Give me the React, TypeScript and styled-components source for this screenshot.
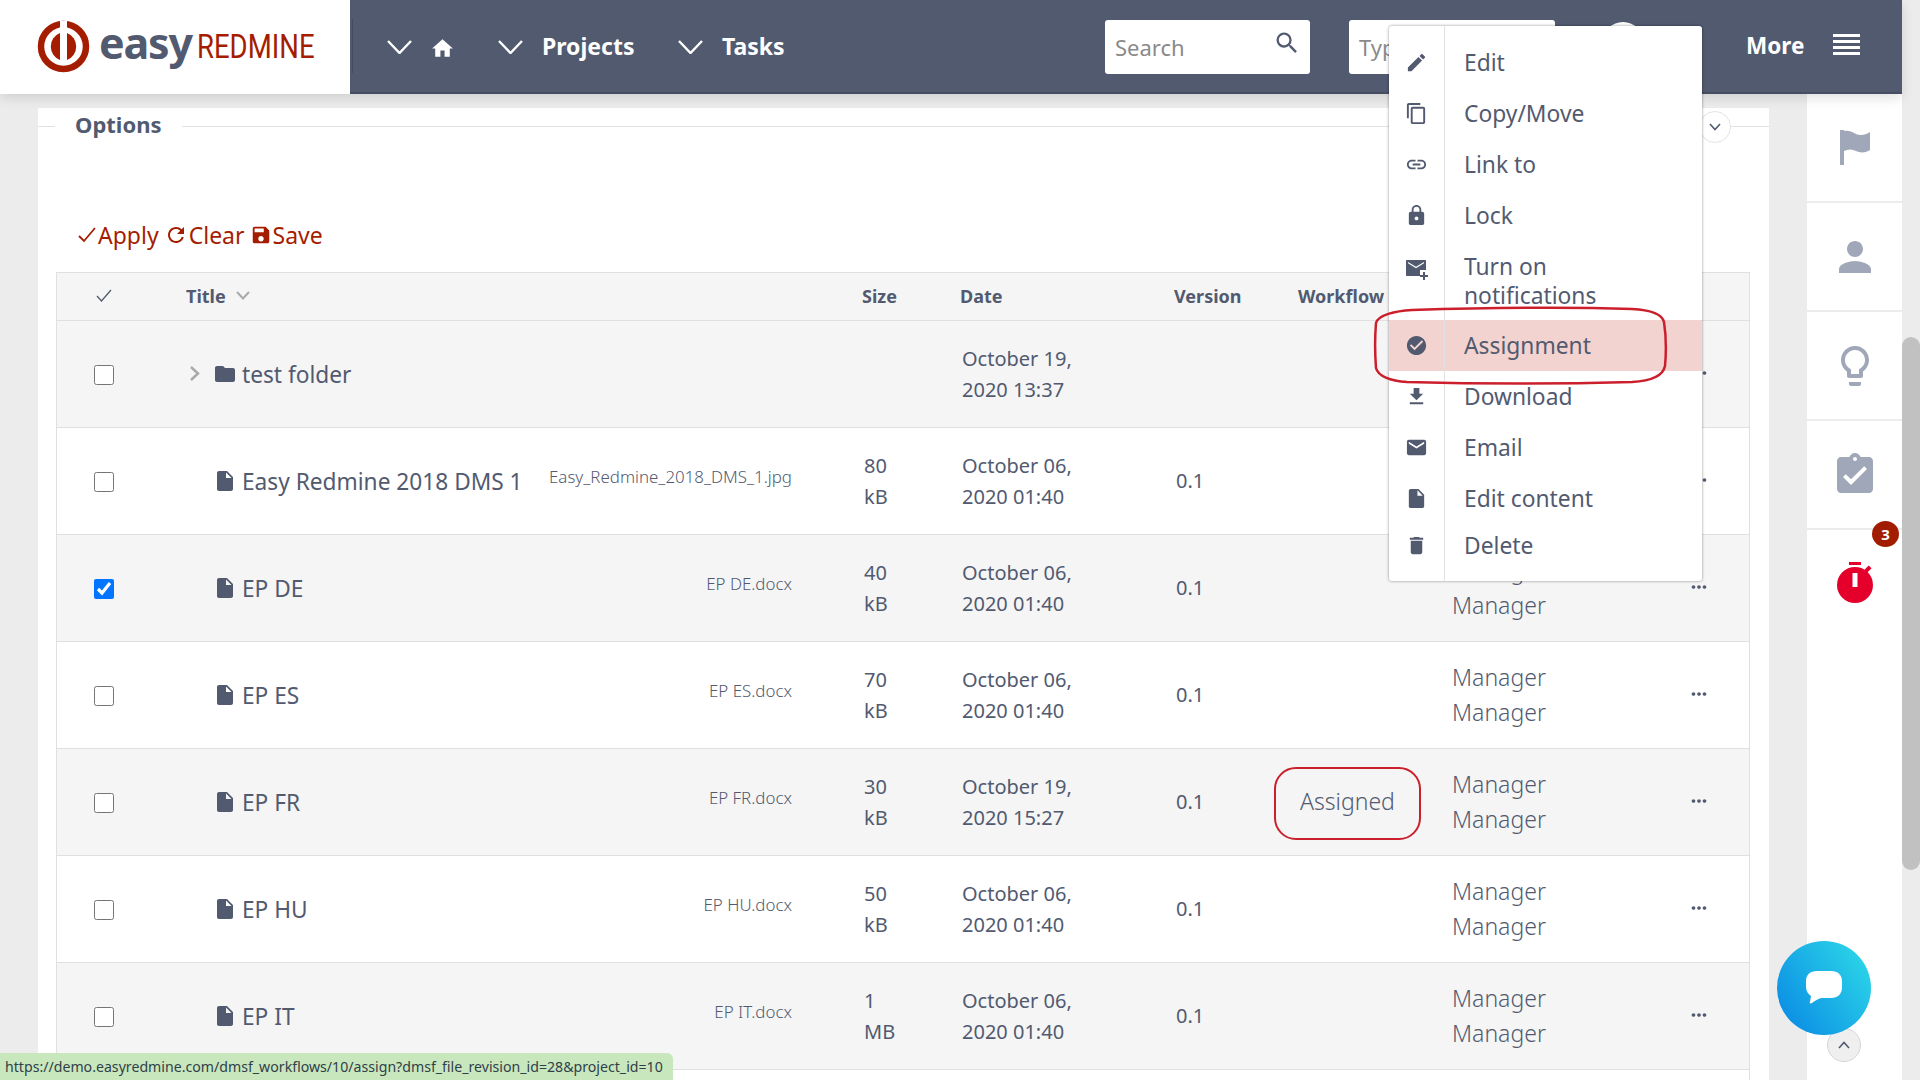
import * as React from 'react';
import styled, { createGlobalStyle } from 'styled-components';
import {
    MdEdit, MdContentCopy, MdLink, MdLock, MdCheckCircle, MdFileDownload, MdEmail,
    MdInsertDriveFile, MdDelete, MdFolder, MdHome, MdSearch, MdPerson, MdLightbulbOutline,
    MdAssignmentTurnedIn, MdSave, MdRefresh, MdMoreHoriz,
} from 'react-icons/md';

const slate = '#525a70';
const rust = '#a51d00';

const GlobalStyle = createGlobalStyle`
    html, body { margin: 0; padding: 0; height: 100%; overflow: hidden; background: #ececec; }
    body { font-family: "Noto Sans", "Open Sans", sans-serif; color: ${slate}; }
    * { box-sizing: border-box; }
`;

const Page = styled.div`
    position: relative;
    width: 1920px;
    height: 1080px;
    overflow: hidden;
    background: #ececec;
`;

/* header */
const Header = styled.header`
    position: absolute;
    left: 0;
    top: 0;
    width: 1902px;
    height: 94px;
    background: ${slate};
    border-bottom: 2px solid #474e63;
    box-shadow: 0 4px 12px rgba(0, 0, 0, .12);
    z-index: 5;
`;
const LogoBox = styled.div`
    position: absolute;
    left: 0;
    top: 0;
    width: 350px;
    height: 94px;
    background: #fff;
`;
const LogoEasy = styled.span`
    position: absolute;
    left: 99px;
    top: 15px;
    font: 700 43px/56px "Noto Sans", sans-serif;
    letter-spacing: -1.200px;
    color: ${slate};
`;
const LogoRedmine = styled.span`
    position: absolute;
    left: 197px;
    top: 25px;
    font: 400 34px/42px "Roboto", sans-serif;
    color: ${rust};
    transform: scaleX(.81);
    transform-origin: left center;
`;
const Separator = styled.div`
    position: absolute;
    left: 352px;
    top: 19px;
    width: 1px;
    height: 54px;
    background: #454c60;
`;
const NavChevron = styled.svg<{ $x: number }>`
    position: absolute;
    left: ${p => p.$x}px;
    top: 40px;
    width: 25px;
    height: 14px;
`;
const NavLabel = styled.span<{ $x: number; $size?: number }>`
    position: absolute;
    left: ${p => p.$x}px;
    top: 30px;
    font-size: ${p => p.$size ?? 23}px;
    line-height: 32px;
    font-weight: 700;
    color: #fff;
`;
const HomeIcon = styled(MdHome)`
    position: absolute;
    left: 430px;
    top: 36px;
    color: #fff;
    font-size: 25px;
`;
const SearchBox = styled.div<{ $x: number; $w: number }>`
    position: absolute;
    left: ${p => p.$x}px;
    top: 20px;
    width: ${p => p.$w}px;
    height: 54px;
    background: #fff;
    border-radius: 3px;
    padding-left: 10px;
    font-size: 22px;
    line-height: 54px;
    color: #8a8a8a;
`;
const SearchGlyph = styled(MdSearch)`
    position: absolute;
    right: 9px;
    top: 9px;
    font-size: 28px;
    color: ${slate};
`;
const Avatar = styled.div`
    position: absolute;
    left: 1603px;
    top: 22px;
    width: 40px;
    height: 40px;
    border-radius: 50%;
    background: #fff;
`;
const MenuBars = styled.div`
    position: absolute;
    left: 1833px;
    top: 34px;
    width: 27px;
    height: 21px;
    background: repeating-linear-gradient(#fff 0 3px, transparent 3px 6px);
`;

/* options panel */
const Panel = styled.main`
    position: absolute;
    left: 38px;
    top: 108px;
    width: 1731px;
    height: 972px;
    background: #fff;
`;
const LegendLine = styled.div`
    position: absolute;
    left: 0;
    right: 0;
    top: 18px;
    height: 1px;
    background: #e2e2e2;
`;
const Legend = styled.div`
    position: absolute;
    left: 17px;
    top: 0;
    padding: 0 20px;
    font-size: 22px;
    line-height: 32px;
    font-weight: 700;
    background: #fff;
`;
const RoundButton = styled.div`
    position: absolute;
    display: flex;
    align-items: center;
    justify-content: center;
    border: 1px solid #e4e4e4;
    border-radius: 50%;
    background: #fff;
    color: ${slate};
`;
const CollapseButton = styled(RoundButton)`
    left: 1661px;
    top: 3px;
    width: 32px;
    height: 32px;
`;
const Actions = styled.div`
    position: absolute;
    left: 39px;
    top: 111px;
    display: flex;
    align-items: center;
    color: ${rust};
    font-size: 23px;
    line-height: 32px;
    gap: 5px;
`;
const ActionLink = styled.span`
    display: inline-flex;
    align-items: center;
    gap: 1px;
    svg { flex: none; }
`;

/* table */
const Table = styled.div`
    position: absolute;
    left: 18px;
    top: 164px;
    width: 1694px;
    height: 830px;
    border: 1px solid #e0e0e0;
    border-bottom: 0;
`;
const columns = '129px 676px 98px 214px 124px 154px 228px 1fr';
const HeadRow = styled.div`
    display: grid;
    grid-template-columns: ${columns};
    align-items: center;
    height: 48px;
    padding-bottom: 2px;
    background: #f5f5f5;
    border-bottom: 1px solid #e0e0e0;
    font-size: 18px;
    font-weight: 700;
`;
const HeadCheck = styled.div`
    padding-left: 39px;
    display: flex;
`;
const HeadTitle = styled.div`
    display: flex;
    align-items: center;
    gap: 10px;
`;
const Row = styled.div<{ $alt: boolean }>`
    display: grid;
    grid-template-columns: ${columns};
    align-items: center;
    height: 107px;
    background: ${p => (p.$alt ? '#f5f5f5' : '#fff')};
    border-bottom: 1px solid #e0e0e0;
    font-size: 20px;
    line-height: 31px;
`;
const CheckCell = styled.div`
    padding-left: 37px;
    display: flex;
`;
const Check = styled.input`
    width: 20px;
    height: 20px;
    margin: 2px 0 0;
`;
const TitleCell = styled.div`
    position: relative;
    display: flex;
    align-items: center;
    height: 100%;
    padding-right: 70px;
`;
const Expander = styled.svg`
    position: absolute;
    left: 3px;
    top: 44px;
    width: 12px;
    height: 17px;
`;
const RowIcon = styled.span`
    position: absolute;
    left: 27px;
    top: 41px;
    display: flex;
    color: ${slate};
    font-size: 24px;
`;
const FileName = styled.span`
    position: absolute;
    left: 56px;
    top: 38px;
    font-size: 22.700px;
    white-space: nowrap;
`;
const StoredName = styled.span`
    margin-left: auto;
    margin-top: -9px;
    font-size: 16.900px;
    font-weight: 300;
    white-space: nowrap;
`;
const Stacked = styled.div`
    padding-left: 2px;
    width: 90%;
`;
const Version = styled.div`
    padding: 0 0 2px 2px;
`;
const WorkflowCell = styled.div`
    padding-left: 2px;
`;
const Person = styled.div`
    font-size: 23px;
    font-weight: 300;
    line-height: 35px;
`;
const Dots = styled(MdMoreHoriz)`
    font-size: 22px;
    margin: -2px 0 0 8px;
    color: ${slate};
`;

/* dropdown */
const Dropdown = styled.div`
    position: absolute;
    left: 1389px;
    top: 26px;
    width: 313px;
    height: 555px;
    background: #fff;
    border-radius: 3px;
    box-shadow: 0 0 3px rgba(0, 0, 0, .45);
    z-index: 6;
`;
const DropdownRule = styled.div`
    position: absolute;
    left: 55px;
    top: 0;
    bottom: 0;
    width: 1px;
    background: #e2e2e2;
    z-index: 1;
`;
const MenuItem = styled.div<{ $y: number; $h?: number; $active?: boolean }>`
    position: absolute;
    left: 0;
    right: 0;
    top: ${p => p.$y}px;
    height: ${p => p.$h ?? 51}px;
    display: flex;
    align-items: center;
    background: ${p => (p.$active ? '#f2d3cf' : 'transparent')};
    font-size: 22.800px;
    line-height: 29px;
`;
const MenuIcon = styled.span<{ $top?: number }>`
    width: 55px;
    display: flex;
    justify-content: center;
    font-size: 23px;
    color: ${slate};
    ${p => (p.$top ? `align-self: flex-start; margin-top: ${p.$top}px;` : '')}
`;
const MenuLabel = styled.span`
    padding-left: 20px;
    width: 220px;
`;

/* red annotations */
const AssignedMark = styled.div`
    position: absolute;
    left: 1274px;
    top: 767px;
    width: 147px;
    height: 73px;
    border: 2.500px solid #cb1f2c;
    border-radius: 22px;
    z-index: 7;
`;
const AssignmentMark = styled.svg`
    position: absolute;
    left: 0;
    top: 0;
    width: 1920px;
    height: 1080px;
    pointer-events: none;
    z-index: 7;
`;
const AssignedText = styled.span`
    position: absolute;
    left: 1300px;
    top: 784px;
    font-size: 23px;
    font-weight: 300;
    line-height: 34px;
    z-index: 2;
`;

/* sidebar */
const Sidebar = styled.aside`
    position: absolute;
    left: 1807px;
    top: 94px;
    width: 95px;
    height: 986px;
    background: #fff;
`;
const SideSlot = styled.div<{ $y: number }>`
    position: absolute;
    left: 0;
    right: 0;
    top: ${p => p.$y}px;
    height: 109px;
    border-bottom: 2px solid #ececec;
    display: flex;
    align-items: center;
    justify-content: center;
    color: #a0a7b8;
`;
const Badge = styled.div`
    position: absolute;
    left: 1872px;
    top: 521px;
    width: 27px;
    height: 26px;
    border-radius: 50%;
    background: #a21c00;
    color: #fff;
    font-size: 15px;
    font-weight: 700;
    line-height: 26px;
    text-align: center;
    z-index: 2;
`;
const TimerIcon = styled.svg`
    position: absolute;
    left: 1836px;
    top: 561px;
    width: 38px;
    height: 43px;
    z-index: 2;
`;
const Scrollbar = styled.div`
    position: absolute;
    left: 1902px;
    top: 0;
    width: 18px;
    height: 1080px;
    background: #ececec;
`;
const ScrollThumb = styled.div`
    position: absolute;
    left: 0;
    top: 337px;
    width: 18px;
    height: 533px;
    background: #c1c1c1;
    border-radius: 9px;
`;
const ChatButton = styled.div`
    position: absolute;
    left: 1777px;
    top: 941px;
    width: 94px;
    height: 94px;
    border-radius: 50%;
    background: linear-gradient(55deg, #0785e4 0%, #2fdde8 100%);
    display: flex;
    align-items: center;
    justify-content: center;
    z-index: 4;
`;
const TopButton = styled(RoundButton)`
    left: 1827px;
    top: 1028px;
    width: 34px;
    height: 34px;
    background: #efefef;
    border-color: #d6d6d6;
    z-index: 3;
`;
const StatusBar = styled.div`
    position: absolute;
    left: 0;
    bottom: 0;
    width: 673px;
    height: 27px;
    background: #c9e7bd;
    border-top-right-radius: 6px;
    padding-left: 5px;
    font-size: 14.150px;
    line-height: 28px;
    color: #30404a;
    white-space: nowrap;
    z-index: 8;
`;

const Chevron = ({ x }: { x: number }) => (
    <NavChevron $x={x} viewBox="0 0 25 14">
        <polyline points="1,1 12.5,13 24,1" fill="none" stroke="#fff" strokeWidth="2.4" />
    </NavChevron>
);

const MailPlus = () => (
    <svg width="24" height="24" viewBox="0 0 24 24" fill="currentColor">
        <path d="M2 3h18c.6 0 1 .4 1 1v9h-6v6H2c-.6 0-1-.4-1-1V4c0-.6.4-1 1-1zm1 3.2 8 5 8-5V5l-8 4.800L3 5z" />
        <path d="M18 15h2v3h3v2h-3v3h-2v-3h-3v-2h3z" />
    </svg>
);

const FlagIcon = () => (
    <svg width="30" height="35" viewBox="0 0 30 35" fill="#a0a7b8">
        <path d="M0 0h4v35H0z" />
        <path d="M4 1C9 0 12 2 16 4C20 6 26 5 30 2V20C26 23 20 23 16 21C12 19 8 19 4 21Z" />
    </svg>
);

interface RowData {
    name: string;
    stored?: string;
    size?: [string, string];
    date: [string, string];
    version?: string;
    folder?: boolean;
    checked?: boolean;
    hideOwners?: boolean;
}

// the owners of the first two rows sit fully behind the open dropdown
const rows: RowData[] = [
    { name: 'test folder', folder: true, date: ['October 19,', '2020 13:37'], hideOwners: true },
    { name: 'Easy Redmine 2018 DMS 1', stored: 'Easy_Redmine_2018_DMS_1.jpg', size: ['80', 'kB'], date: ['October 06,', '2020 01:40'], version: '0.1', hideOwners: true },
    { name: 'EP DE', stored: 'EP DE.docx', size: ['40', 'kB'], date: ['October 06,', '2020 01:40'], version: '0.1', checked: true },
    { name: 'EP ES', stored: 'EP ES.docx', size: ['70', 'kB'], date: ['October 06,', '2020 01:40'], version: '0.1' },
    { name: 'EP FR', stored: 'EP FR.docx', size: ['30', 'kB'], date: ['October 19,', '2020 15:27'], version: '0.1' },
    { name: 'EP HU', stored: 'EP HU.docx', size: ['50', 'kB'], date: ['October 06,', '2020 01:40'], version: '0.1' },
    { name: 'EP IT', stored: 'EP IT.docx', size: ['1', 'MB'], date: ['October 06,', '2020 01:40'], version: '0.1' },
];

const menu: { label: string; icon: React.ReactNode; y: number; h?: number; iconTop?: number; active?: boolean }[] = [
    { label: 'Edit', icon: <MdEdit />, y: 11 },
    { label: 'Copy/Move', icon: <MdContentCopy />, y: 62 },
    { label: 'Link to', icon: <MdLink />, y: 113 },
    { label: 'Lock', icon: <MdLock />, y: 164 },
    { label: 'Turn on notifications', icon: <MailPlus />, y: 215, h: 79, iconTop: 16 },
    { label: 'Assignment', icon: <MdCheckCircle />, y: 294, h: 51, active: true },
    { label: 'Download', icon: <MdFileDownload />, y: 345 },
    { label: 'Email', icon: <MdEmail />, y: 396 },
    { label: 'Edit content', icon: <MdInsertDriveFile />, y: 447 },
    { label: 'Delete', icon: <MdDelete />, y: 494 },
];

export default function App() {
    return (
        <Page>
            <GlobalStyle />
            <Header>
                <LogoBox>
                    <svg width="350" height="94" viewBox="0 0 350 94" style={{ position: 'absolute' }}>
                        <circle cx="63.500" cy="46.500" r="22.500" fill="none" stroke={rust} strokeWidth="6.500" />
                        <path d="M60 33a14.500 14.500 0 0 0 0 27z" fill={rust} />
                        <path d="M67 33a14.500 14.500 0 0 1 0 27z" fill={rust} />
                        <rect x="60" y="21" width="7" height="26" fill="#fff" />
                    </svg>
                    <LogoEasy>easy</LogoEasy>
                    <LogoRedmine>REDMINE</LogoRedmine>
                </LogoBox>
                <Separator />
                <Chevron x={387} />
                <HomeIcon />
                <Chevron x={498} />
                <NavLabel $x={542}>Projects</NavLabel>
                <Chevron x={678} />
                <NavLabel $x={722}>Tasks</NavLabel>
                <SearchBox $x={1105} $w={205}>
                    Search
                    <SearchGlyph />
                </SearchBox>
                <SearchBox $x={1349} $w={206}>Type</SearchBox>
                <Avatar />
                <NavLabel $x={1746} $size={22.500}>More</NavLabel>
                <MenuBars />
            </Header>

            <Panel>
                <LegendLine />
                <Legend>Options</Legend>
                <CollapseButton>
                    <svg width="12" height="8" viewBox="0 0 12 8">
                        <polyline points="1,1 6,6.500 11,1" fill="none" stroke={slate} strokeWidth="1.600" />
                    </svg>
                </CollapseButton>
                <Actions>
                    <ActionLink>
                        <svg width="20" height="18" viewBox="0 0 20 18">
                            <polyline points="2,10 7,15 18,2" fill="none" stroke={rust} strokeWidth="1.800" />
                        </svg>
                        Apply
                    </ActionLink>
                    <ActionLink><MdRefresh size={24} />Clear</ActionLink>
                    <ActionLink><MdSave size={22} />Save</ActionLink>
                </Actions>
                <Table>
                    <HeadRow>
                        <HeadCheck>
                            <svg width="16" height="13" viewBox="0 0 16 13">
                                <polyline points="1,7 5.500,12 15,1" fill="none" stroke={slate} strokeWidth="1.300" />
                            </svg>
                        </HeadCheck>
                        <HeadTitle>
                            Title
                            <svg width="14" height="9" viewBox="0 0 14 9">
                                <polyline points="1,1 7,7.500 13,1" fill="none" stroke="#aaa" strokeWidth="2" />
                            </svg>
                        </HeadTitle>
                        <div>Size</div>
                        <div>Date</div>
                        <div>Version</div>
                        <div>Workflow</div>
                        <div />
                        <div />
                    </HeadRow>
                    {rows.map((r, i) => (
                        <Row key={r.name} $alt={i % 2 === 0}>
                            <CheckCell>
                                <Check type="checkbox" checked={!!r.checked} readOnly />
                            </CheckCell>
                            <TitleCell>
                                {r.folder && (
                                    <Expander viewBox="0 0 12 17">
                                        <polyline points="2,2 9,8.500 2,15" fill="none" stroke="#a8a8a8" strokeWidth="2.400" />
                                    </Expander>
                                )}
                                <RowIcon>{r.folder ? <MdFolder /> : <MdInsertDriveFile />}</RowIcon>
                                <FileName>{r.name}</FileName>
                                {r.stored && <StoredName>{r.stored}</StoredName>}
                            </TitleCell>
                            <Stacked>{r.size && <>{r.size[0]}<br />{r.size[1]}</>}</Stacked>
                            <Stacked>{r.date[0]}<br />{r.date[1]}</Stacked>
                            <Version>{r.version}</Version>
                            <WorkflowCell />
                            <Person>{!r.hideOwners && <>Manager<br />Manager</>}</Person>
                            <Dots />
                        </Row>
                    ))}
                </Table>
            </Panel>

            <AssignedText>Assigned</AssignedText>
            <AssignedMark />

            <Dropdown>
                <DropdownRule />
                {menu.map(m => (
                    <MenuItem key={m.label} $y={m.y} $h={m.h} $active={m.active}>
                        <MenuIcon $top={m.iconTop}>{m.icon}</MenuIcon>
                        <MenuLabel>{m.label}</MenuLabel>
                    </MenuItem>
                ))}
            </Dropdown>
            <AssignmentMark viewBox="0 0 1920 1080">
                <path
                    d="M1412 310C1480 308 1570 307 1632 309C1652 310 1662 314 1664 322C1666 335 1666 355 1665 366C1663 376 1650 381 1632 382C1560 384 1480 384 1407 382C1390 381 1378 376 1376 368C1375 355 1375 335 1376 323C1378 315 1395 311 1412 310Z"
                    fill="none"
                    stroke="#cb1f2c"
                    strokeWidth="2.500"
                />
            </AssignmentMark>

            <Sidebar>
                <SideSlot $y={0}><FlagIcon /></SideSlot>
                <SideSlot $y={109}><MdPerson size={48} /></SideSlot>
                <SideSlot $y={218}><MdLightbulbOutline size={48} /></SideSlot>
                <SideSlot $y={327}><MdAssignmentTurnedIn size={48} /></SideSlot>
            </Sidebar>
            <Badge>3</Badge>
            <TimerIcon viewBox="0 0 38 43">
                <rect x="13" y="1" width="12" height="3" fill="#e4002b" />
                <circle cx="19" cy="24" r="18" fill="#e4002b" />
                <rect x="30" y="5" width="4" height="7" transform="rotate(45 32 8)" fill="#e4002b" />
                <rect x="16.500" y="12" width="5" height="14" fill="#fff" />
            </TimerIcon>

            <Scrollbar><ScrollThumb /></Scrollbar>
            <TopButton>
                <svg width="12" height="8" viewBox="0 0 12 8">
                    <polyline points="1,7 6,1.500 11,7" fill="none" stroke={slate} strokeWidth="1.600" />
                </svg>
            </TopButton>
            <ChatButton>
                <svg width="42" height="42" viewBox="0 0 42 42">
                    <path d="M14 4h14c7 0 11 4 11 10v6c0 7-4 11-11 11H20c-4 0-7 2-11 5-2 1-3 0-2-1l1-6c-3-2-5-5-5-9v-6C3 8 7 4 14 4z" fill="#fff" />
                </svg>
            </ChatButton>
            <StatusBar>https://demo.easyredmine.com/dmsf_workflows/10/assign?dmsf_file_revision_id=28&amp;project_id=10</StatusBar>
        </Page>
    );
}
